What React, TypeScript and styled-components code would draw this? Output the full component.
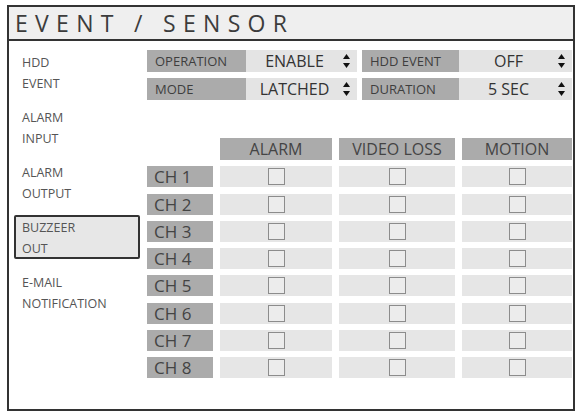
import React from 'react'
import styled, { createGlobalStyle } from 'styled-components'

const GlobalStyle = createGlobalStyle`
  html, body {
    margin: 0;
    padding: 0;
    background: #ffffff;
  }
  body {
    font-family: 'Open Sans', 'Noto Sans', sans-serif;
    color: #444;
  }
`

const Frame = styled.div`
  box-sizing: border-box;
  margin: 5px 0 0 7px;
  width: 568px;
  height: 406px;
  border: 2px solid #333;
  background: #fff;
`

const TitleBar = styled.div`
  height: 32px;
  line-height: 32px;
  padding-left: 6px;
  background: #efefef;
  border-bottom: 2px solid #333;
  font-size: 23px;
  letter-spacing: 7.3px;
  color: #3c3c3c;
  white-space: nowrap;
`

const Body = styled.div`
  display: flex;
  padding-top: 9px;
`

const Sidebar = styled.div`
  width: 133px;
  padding-left: 5px;
  display: flex;
  flex-direction: column;
  gap: 11px;
`

const MenuItem = styled.div<{ $active?: boolean }>`
  box-sizing: border-box;
  width: 126px;
  height: 44px;
  padding-left: 6px;
  border: 2px solid ${p => (p.$active ? '#333' : 'transparent')};
  border-radius: 2px;
  background: ${p => (p.$active ? '#e7e7e7' : 'transparent')};
  font-size: 12.5px;
  line-height: 21px;
  color: #555;
  text-transform: uppercase;
  overflow: visible;
`

const Content = styled.div`
  width: 426px;
`

const Settings = styled.div`
  display: grid;
  grid-template-columns: 210px 210px;
  column-gap: 5px;
  row-gap: 6px;
`

const Field = styled.div<{ $labelWidth: number }>`
  display: grid;
  grid-template-columns: ${p => p.$labelWidth}px 1fr;
  height: 22px;
`

const FieldLabel = styled.div`
  background: #ababab;
  font-size: 13px;
  line-height: 22px;
  padding-left: 8px;
  color: #3e3e3e;
`

const FieldValue = styled.div`
  display: flex;
  align-items: center;
  background: #e4e4e4;
  padding-right: 7px;
`

const ValueText = styled.span`
  flex: 1;
  text-align: center;
  font-size: 16px;
  color: #333;
`

const Spinner = styled.svg`
  width: 7px;
  height: 14px;
  flex: none;
`

const Table = styled.div`
  display: grid;
  grid-template-columns: 66px 112px 116px 110px;
  column-gap: 7px;
  row-gap: 6.3px;
  margin-top: 38px;
`

const HeaderCell = styled.div`
  height: 22px;
  line-height: 22px;
  background: #ababab;
  text-align: center;
  font-size: 16px;
  color: #444;
`

const Blank = styled.div``

const ChannelLabel = styled.div`
  height: 21px;
  line-height: 21px;
  padding-left: 7px;
  background: #ababab;
  font-size: 17px;
  color: #444;
`

const Cell = styled.div`
  height: 21px;
  display: flex;
  align-items: center;
  justify-content: center;
  background: #e6e6e6;
`

const CheckBox = styled.div`
  box-sizing: border-box;
  width: 17px;
  height: 17px;
  border: 1.5px solid #8c8c8c;
  background: #ececec;
`

const menu = [
  ['HDD', 'EVENT'],
  ['ALARM', 'INPUT'],
  ['ALARM', 'OUTPUT'],
  ['BUZZEER', 'OUT'],
  ['E-MAIL', 'NOTIFICATION'],
]

const settings = [
  { label: 'OPERATION', value: 'ENABLE', width: 99 },
  { label: 'HDD EVENT', value: 'OFF', width: 97 },
  { label: 'MODE', value: 'LATCHED', width: 99 },
  { label: 'DURATION', value: '5 SEC', width: 97 },
]

const columns = ['ALARM', 'VIDEO LOSS', 'MOTION']

const Arrows = () => (
  <Spinner viewBox="0 0 7 14">
    <path d="M3.5 0 L7 5 L0 5 Z" fill="#111" />
    <path d="M0 9 L7 9 L3.5 14 Z" fill="#111" />
  </Spinner>
)

const App = () => {
  return (
    <>
      <GlobalStyle />
      <Frame>
        <TitleBar>EVENT / SENSOR</TitleBar>
        <Body>
          <Sidebar>
            {menu.map((lines, i) => (
              <MenuItem key={i} $active={i === 3}>
                {lines[0]}
                <br />
                {lines[1]}
              </MenuItem>
            ))}
          </Sidebar>
          <Content>
            <Settings>
              {settings.map(s => (
                <Field key={s.label} $labelWidth={s.width}>
                  <FieldLabel>{s.label}</FieldLabel>
                  <FieldValue>
                    <ValueText>{s.value}</ValueText>
                    <Arrows />
                  </FieldValue>
                </Field>
              ))}
            </Settings>
            <Table>
              <Blank />
              {columns.map(c => (
                <HeaderCell key={c}>{c}</HeaderCell>
              ))}
              {[1, 2, 3, 4, 5, 6, 7, 8].map(n => (
                <React.Fragment key={n}>
                  <ChannelLabel>CH {n}</ChannelLabel>
                  {columns.map(c => (
                    <Cell key={c}>
                      <CheckBox />
                    </Cell>
                  ))}
                </React.Fragment>
              ))}
            </Table>
          </Content>
        </Body>
      </Frame>
    </>
  )
}

export default App
